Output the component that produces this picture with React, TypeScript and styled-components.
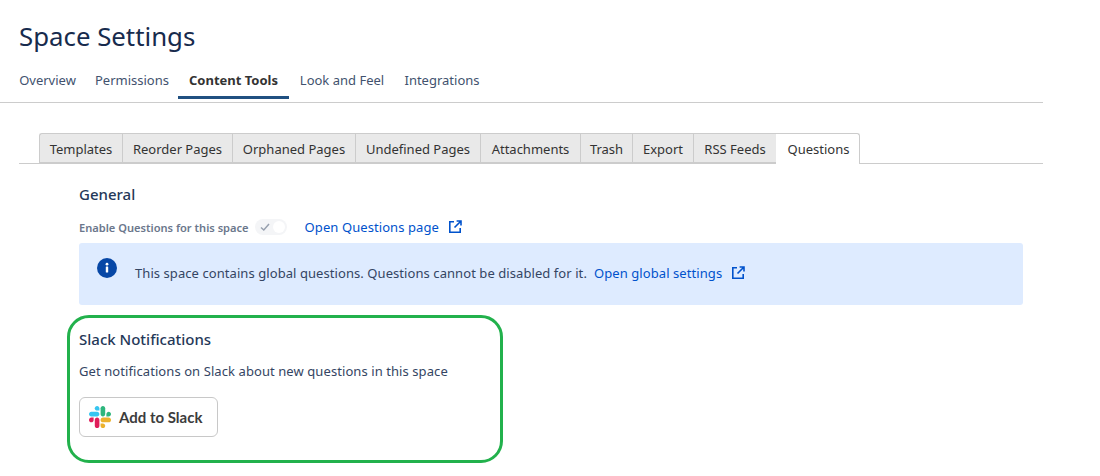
import React from 'react';
import styled, { createGlobalStyle } from 'styled-components';

const GlobalStyle = createGlobalStyle`
  html, body {
    margin: 0;
    background: #fff;
  }
  body {
    font-family: "Noto Sans", "Open Sans", sans-serif;
    color: #253858;
  }
`;

const Page = styled.div`
  width: 1043px;
  height: 476px;
  overflow: hidden;
`;

const Header = styled.header`
  height: 85px;
  padding: 16px 0 1px 19px;
  border-bottom: 1px solid #ccc;
`;

const Title = styled.h1`
  margin: 0;
  height: 40px;
  font-size: 25.8px;
  line-height: 40px;
  font-weight: 400;
  color: #172b4d;
`;

const Nav = styled.nav`
  display: flex;
  margin: 7px 0 0 -10px;
`;

const NavItem = styled.a<{ $active?: boolean; $width: number }>`
  width: ${(p) => p.$width}px;
  height: 36px;
  box-sizing: border-box;
  text-align: center;
  font-size: 13px;
  line-height: 34px;
  font-weight: ${(p) => (p.$active ? 700 : 400)};
  color: ${(p) => (p.$active ? '#333' : '#42526e')};
  border-bottom: 3px solid ${(p) => (p.$active ? '#205081' : 'transparent')};
`;

const Tabs = styled.div`
  display: flex;
  margin: 30px 0 0 19px;
  padding-left: 20px;
  height: 30px;
  border-bottom: 1px solid #ccc;
`;

const Tab = styled.a<{ $active?: boolean; $width: number }>`
  width: ${(p) => p.$width}px;
  height: ${(p) => (p.$active ? 31 : 30)}px;
  padding-left: ${(p) => (p.$active ? 2 : 0)}px;
  box-sizing: border-box;
  text-align: center;
  font-size: 13px;
  line-height: 31px;
  color: #333;
  background: ${(p) => (p.$active ? '#fff' : '#e9e9e9')};
  border: 1px solid #ccc;
  border-left-width: ${(p) => (p.$active ? 0 : 1)}px;
  border-bottom-width: ${(p) => (p.$active ? 0 : 1)}px;
  border-right-width: ${(p) => (p.$active ? 1 : 0)}px;
  border-radius: ${(p) => (p.$active ? '0 3px 0 0' : '0')};
  &:first-child {
    border-top-left-radius: 3px;
  }
`;

const Content = styled.main`
  padding: 0 20px 0 79px;
`;

const SectionTitle = styled.h2`
  margin: 0;
  font-size: 15px;
  line-height: 20px;
  font-weight: 500;
  color: #253858;
`;

const General = styled.section`
  padding-top: 20px;
`;

const ToggleRow = styled.div`
  display: flex;
  align-items: center;
  height: 24px;
  margin-top: 11px;
`;

const ToggleLabel = styled.span`
  font-size: 11.1px;
  font-weight: 600;
  color: #6b778c;
`;

const Toggle = styled.span`
  display: inline-flex;
  align-items: center;
  width: 32px;
  height: 16px;
  margin: 0 18px 0 6px;
  padding: 2px;
  box-sizing: border-box;
  border-radius: 8px;
  background: #f4f5f7;
  svg {
    margin-left: 2px;
  }
`;

const ToggleKnob = styled.span`
  width: 12px;
  height: 12px;
  margin-left: auto;
  border-radius: 50%;
  background: #fff;
`;

const Link = styled.a`
  display: inline-flex;
  align-items: center;
  gap: 9px;
  font-size: 13px;
  letter-spacing: 0.08px;
  color: #0052cc;
`;

const Banner = styled.div`
  display: flex;
  height: 62px;
  margin-top: 4px;
  padding: 15px 0 0 18px;
  box-sizing: border-box;
  border-radius: 3px;
  background: #deebff;
  svg.info {
    flex: none;
  }
`;

const BannerText = styled.p`
  display: flex;
  align-items: center;
  gap: 7px;
  height: 20px;
  margin: 5px 0 0 18px;
  font-size: 13px;
  letter-spacing: 0.07px;
  color: #344563;
`;

const Highlight = styled.section`
  width: 436px;
  height: 148px;
  margin: 10px 0 0 -12px;
  padding: 11px 0 0 9px;
  box-sizing: border-box;
  border: 3px solid #22b14c;
  border-radius: 22px;
`;

const Description = styled.p`
  margin: 12px 0 0;
  font-size: 13px;
  letter-spacing: 0.08px;
  line-height: 20px;
  color: #344563;
`;

const SlackButton = styled.a`
  display: flex;
  align-items: center;
  gap: 8px;
  width: 139px;
  height: 40px;
  margin-top: 16px;
  padding-left: 9px;
  box-sizing: border-box;
  border: 1px solid #c8c8c8;
  border-radius: 6px;
  font-family: "Lato", sans-serif;
  font-size: 15px;
  font-weight: 700;
  color: #3c3c3c;
`;

const ExternalIcon = () => (
  <svg width="14" height="14" viewBox="0 0 14 14" fill="none" stroke="#0052cc" strokeWidth="1.6">
    <path d="M6 1.8H1.8v10.4h10.4V8" />
    <path d="M6.5 7.5 12.5 1.5M8.6 1h4.4v4.4" />
  </svg>
);

const InfoIcon = () => (
  <svg className="info" width="20" height="20" viewBox="0 0 20 20">
    <circle cx="10" cy="10" r="10" fill="#0747a6" />
    <rect x="8.8" y="8.6" width="2.4" height="6" rx="0.5" fill="#fff" />
    <circle cx="10" cy="6.2" r="1.4" fill="#fff" />
  </svg>
);

const SlackLogo = () => (
  <svg width="22" height="22" viewBox="0 0 122.8 122.8">
    <path d="M25.8 77.6c0 7.1-5.8 12.9-12.9 12.9S0 84.7 0 77.6s5.8-12.9 12.9-12.9h12.9v12.9z" fill="#e01e5a" />
    <path d="M32.3 77.6c0-7.1 5.8-12.9 12.9-12.9s12.9 5.8 12.9 12.9v32.3c0 7.1-5.8 12.9-12.9 12.9s-12.9-5.8-12.9-12.9V77.6z" fill="#e01e5a" />
    <path d="M45.2 25.8c-7.1 0-12.9-5.8-12.9-12.9S38.1 0 45.2 0s12.9 5.8 12.9 12.9v12.9H45.2z" fill="#36c5f0" />
    <path d="M45.2 32.3c7.1 0 12.9 5.8 12.9 12.9s-5.8 12.9-12.9 12.9H12.9C5.8 58.1 0 52.3 0 45.2s5.8-12.9 12.9-12.9h32.3z" fill="#36c5f0" />
    <path d="M97 45.2c0-7.1 5.8-12.9 12.9-12.9s12.9 5.8 12.9 12.9-5.8 12.9-12.9 12.9H97V45.2z" fill="#2eb67d" />
    <path d="M90.5 45.2c0 7.1-5.8 12.9-12.9 12.9s-12.9-5.8-12.9-12.9V12.9C64.7 5.8 70.5 0 77.6 0s12.9 5.8 12.9 12.9v32.3z" fill="#2eb67d" />
    <path d="M77.6 97c7.1 0 12.9 5.8 12.9 12.9s-5.8 12.9-12.9 12.9-12.9-5.8-12.9-12.9V97h12.9z" fill="#ecb22e" />
    <path d="M77.6 90.5c-7.1 0-12.9-5.8-12.9-12.9s5.8-12.9 12.9-12.9h32.3c7.1 0 12.9 5.8 12.9 12.9s-5.8 12.9-12.9 12.9H77.6z" fill="#ecb22e" />
  </svg>
);

const navItems = [
  { label: 'Overview', width: 77 },
  { label: 'Permissions', width: 92 },
  { label: 'Content Tools', width: 111 },
  { label: 'Look and Feel', width: 106 },
  { label: 'Integrations', width: 94 },
];

const tabs = [
  { label: 'Templates', width: 83 },
  { label: 'Reorder Pages', width: 110 },
  { label: 'Orphaned Pages', width: 123 },
  { label: 'Undefined Pages', width: 125 },
  { label: 'Attachments', width: 100 },
  { label: 'Trash', width: 52 },
  { label: 'Export', width: 61 },
  { label: 'RSS Feeds', width: 83 },
  { label: 'Questions', width: 84 },
];

export default function App() {
  return (
    <Page>
      <GlobalStyle />
      <Header>
        <Title>Space Settings</Title>
        <Nav>
          {navItems.map((item) => (
            <NavItem key={item.label} $width={item.width} $active={item.label === 'Content Tools'}>{item.label}</NavItem>
          ))}
        </Nav>
      </Header>
      <Tabs>
        {tabs.map((tab) => (
          <Tab key={tab.label} $width={tab.width} $active={tab.label === 'Questions'}>{tab.label}</Tab>
        ))}
      </Tabs>
      <Content>
        <General>
          <SectionTitle>General</SectionTitle>
          <ToggleRow>
            <ToggleLabel>Enable Questions for this space</ToggleLabel>
            <Toggle>
              <svg width="12" height="12" viewBox="0 0 12 12" fill="none" stroke="#97a0af" strokeWidth="1.5">
                <path d="M2 6.5 4.8 9 10 3" />
              </svg>
              <ToggleKnob />
            </Toggle>
            <Link>Open Questions page <ExternalIcon /></Link>
          </ToggleRow>
          <Banner>
            <InfoIcon />
            <BannerText>
              This space contains global questions. Questions cannot be disabled for it.
              <Link>Open global settings <ExternalIcon /></Link>
            </BannerText>
          </Banner>
        </General>
        <Highlight>
          <SectionTitle>Slack Notifications</SectionTitle>
          <Description>Get notifications on Slack about new questions in this space</Description>
          <SlackButton><SlackLogo />Add to Slack</SlackButton>
        </Highlight>
      </Content>
    </Page>
  );
}
